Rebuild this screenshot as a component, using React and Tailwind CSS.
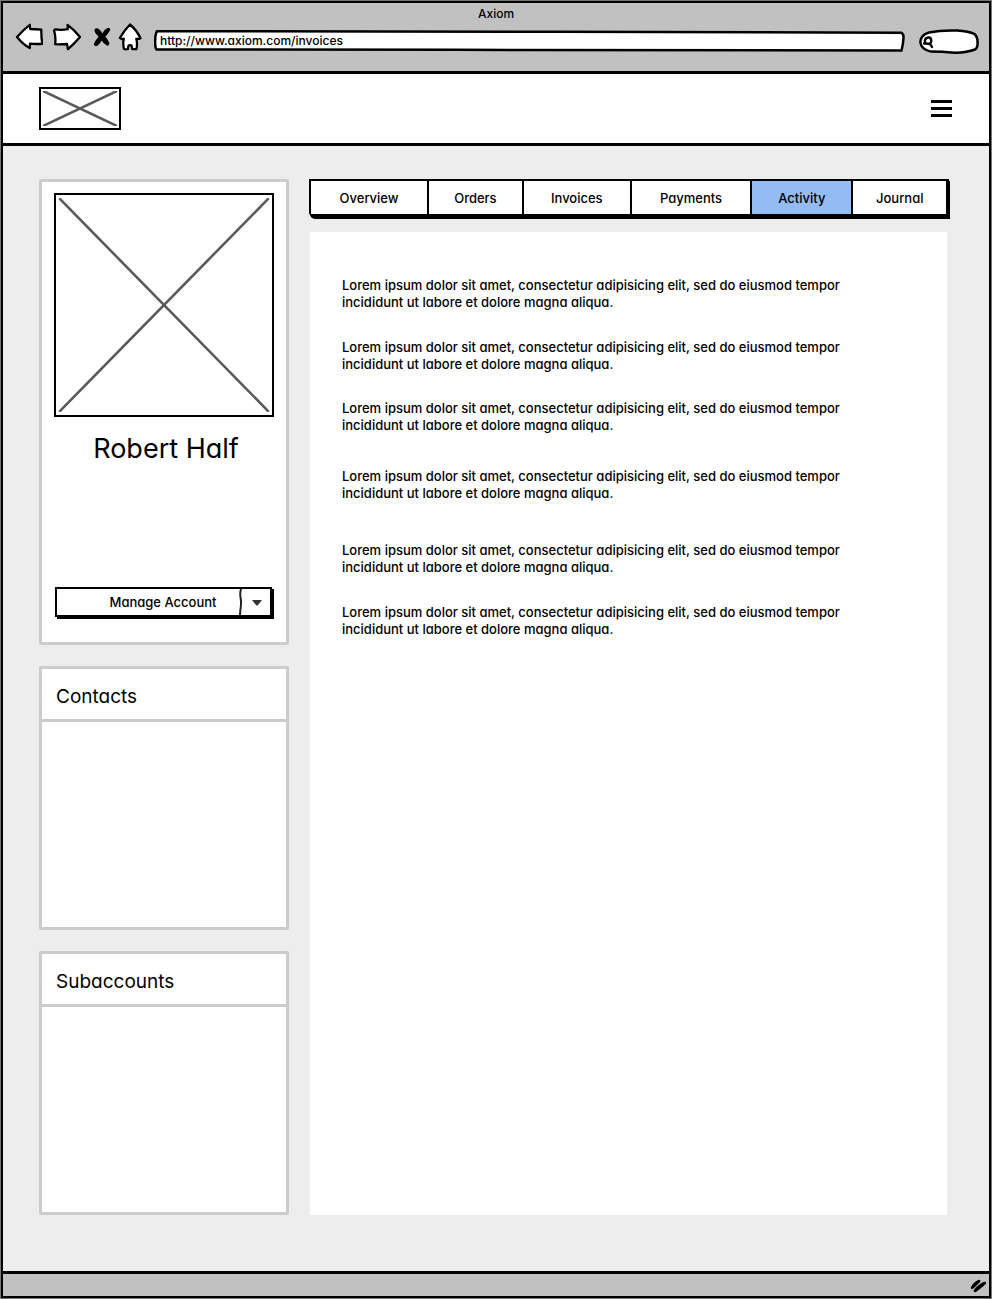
import React from "react";

const sketchFont =
  "font-['Inter','Liberation_Sans',sans-serif] font-medium [font-feature-settings:'cv11']";

const tabs = [
  { label: "Overview", size: "grow-[118]" },
  { label: "Orders", size: "grow-[94]" },
  { label: "Invoices", size: "grow-[108]" },
  { label: "Payments", size: "grow-[120]" },
  { label: "Activity", size: "grow-[101]", active: true },
  { label: "Journal", size: "grow-[94]" },
];

const lorem =
  "Lorem ipsum dolor sit amet, consectetur adipisicing elit, sed do eiusmod tempor incididunt ut labore et dolore magna aliqua.";

const activity = ["mb-7", "mb-[27px]", "mb-[34px]", "mb-10", "mb-7", "mb-0"];

function IconButton({ label, children }) {
  return (
    <button type="button" aria-label={label} className="shrink-0">
      {children}
    </button>
  );
}

const stroke = {
  stroke: "#000",
  strokeWidth: 2.3,
  strokeLinejoin: "round",
  strokeLinecap: "round",
};

function BackIcon() {
  return (
    <svg width="28" height="28" viewBox="0 0 28 28" fill="#fff" {...stroke}>
      <path d="M2 14 Q8.5 6.5 14.8 1.8 L15.2 6 Q20 6 26.3 6.7 Q26.2 14 27.3 20.8 Q21 21.3 15 20.6 L14.8 25 Q8 21.5 2 14 Z" />
    </svg>
  );
}

function ForwardIcon() {
  return (
    <svg width="28" height="28" viewBox="0 0 28 28" fill="#fff" {...stroke}>
      <path d="M1.2 8 Q1 6.6 2.6 6.4 Q9 7.300 14.8 6.2 L14.6 1.8 Q21.500 7 27 14 Q21.500 20.500 15 26.200 L14 21 Q8 21.500 2.2 21.200 Q3 14 1.200 8 Z" />
    </svg>
  );
}

function StopIcon() {
  return (
    <svg width="18" height="20" viewBox="0 0 18 20" fill="#000">
      <path d="M1.5 2.500 Q3 .2 5.500 1.800 Q8 3.500 9.300 6.500 Q11 2.500 14.500 1 Q18 .6 17 3.500 Q14.800 7 12.300 9.800 Q14.800 12 16.400 16 Q16.200 19 13.800 18.600 Q10.500 16.500 8.700 13.400 Q7 16.500 4.500 18.800 Q.6 19.700 .8 17 Q3 12.500 5.700 9.600 Q1.200 6 1.500 2.500 Z" />
    </svg>
  );
}

function HomeIcon() {
  return (
    <svg width="24" height="28" viewBox="0 0 24 28" fill="#fff" {...stroke}>
      <path d="M12 1.500 Q7 6.500 1.800 15 Q3.500 16.500 5.800 15.800 Q4.600 21 6 26 Q8 26.6 10 26 Q10 23.600 10.600 22.600 Q12.2 21.8 13.500 22.600 L14.2 26 Q16.4 26.400 18.500 26 Q19.600 21 18.300 15.800 Q21 16.200 22.500 15.200 Q18.500 7 12 1.500 Z" />
    </svg>
  );
}

function CrossBox({ className, label }) {
  return (
    <div
      role="img"
      aria-label={label}
      className={`border-2 border-black bg-white p-0.5 ${className}`}
    >
      <svg
        className="block h-full w-full"
        viewBox="0 0 100 100"
        preserveAspectRatio="none"
        stroke="#595959"
        strokeWidth="2.6"
        strokeLinecap="round"
      >
        <path d="M1 1 L99 99" vectorEffect="non-scaling-stroke" />
        <path d="M99 1 L1 99" vectorEffect="non-scaling-stroke" />
      </svg>
    </div>
  );
}

function SketchOutline({ viewBox, d }) {
  return (
    <svg
      aria-hidden="true"
      className="absolute inset-0 h-full w-full"
      viewBox={viewBox}
      preserveAspectRatio="none"
      fill="#fff"
      stroke="#000"
      strokeWidth="2.5"
      strokeLinejoin="round"
    >
      <path d={d} vectorEffect="non-scaling-stroke" />
    </svg>
  );
}

function BrowserBar() {
  return (
    <header className="flex h-[71px] flex-col border-b-3 border-black bg-[#c1c1c1]">
      <div className="h-5 pt-px text-center text-[12px] leading-5">Axiom</div>
      <div className="flex items-start pr-2.5 pl-3">
        <div className="flex items-center">
          <IconButton label="Back">
            <BackIcon />
          </IconButton>
          <div className="w-2.5" />
          <IconButton label="Forward">
            <ForwardIcon />
          </IconButton>
          <div className="w-3" />
          <IconButton label="Stop">
            <StopIcon />
          </IconButton>
          <div className="w-[7px]" />
          <IconButton label="Home">
            <HomeIcon />
          </IconButton>
        </div>
        <div className="relative mt-1.5 ml-3 h-[23px] min-w-0 flex-1">
          <SketchOutline
            viewBox="0 0 750 23"
            d="M3 2.200 Q300 1.800 400 2.700 T746 3.700 Q748.800 4.500 748.500 9 Q748.200 15 746.500 21.600 Q500 21.600 300 20.800 T2.500 20.500 Q.8 18 1.200 12 Q1.200 5 3 2.200 Z"
          />
          <input
            type="text"
            aria-label="Address"
            defaultValue="http://www.axiom.com/invoices"
            className="relative block h-[23px] w-full bg-transparent px-1.5 text-[12px] outline-none"
          />
        </div>
        <label className="relative mt-1.5 ml-3.5 flex h-[25px] w-[60px] items-center">
          <SketchOutline
            viewBox="0 0 60 25"
            d="M1.300 13 Q1.500 6 10 3.500 Q22 1 38 1.500 Q50 2.300 55.500 5 Q58.800 8 58.600 14 Q58.600 19 56 20.500 Q48 23.500 36 23.800 Q22 22.600 12 22.600 Q2 20.500 1.300 13 Z"
          />
          <svg
            width="13"
            height="14"
            viewBox="0 0 13 14"
            fill="none"
            className="relative ml-[3px] shrink-0"
            {...stroke}
          >
            <path d="M6.500 2.500 Q3 2.800 2.800 6 Q3 9 6.500 8.800 Q9.600 8.600 9.300 5.300 Q9 2.300 6.500 2.500 Z M2 8.500 L4 8.300 M7.500 9 Q9.300 10 10 12" />
          </svg>
          <input
            type="text"
            aria-label="Search"
            className="relative w-full min-w-0 bg-transparent pr-2 text-[12px] outline-none"
          />
        </label>
      </div>
    </header>
  );
}

function Panel({ title }) {
  return (
    <section className="flex h-[264px] flex-col rounded-[2px] border-3 border-[#ccc] bg-white">
      <h2 className="h-[53px] border-b-3 border-[#ccc] px-3.5 text-[19px] leading-[56px] font-normal">
        {title}
      </h2>
    </section>
  );
}

export default function App() {
  return (
    <div
      className={`flex min-h-screen flex-col bg-[#777] p-px text-black ${sketchFont}`}
    >
      <div className="flex grow flex-col border-2 border-black bg-[#ededed]">
        <BrowserBar />

        <div className="flex h-[72px] items-center justify-between border-b-3 border-black bg-white pr-[37px] pl-9">
          <CrossBox className="h-[43px] w-[82px]" label="Logo" />
          <button
            type="button"
            aria-label="Menu"
            className="flex w-[21px] flex-col gap-1"
          >
            <span className="h-[3px] w-full bg-black" />
            <span className="h-[3px] w-full bg-black" />
            <span className="h-[3px] w-full bg-black" />
          </button>
        </div>

        <main className="flex grow gap-[21px] pt-[33px] pr-[42px] pb-14 pl-9">
          <aside className="flex w-[250px] shrink-0 flex-col gap-[21px]">
            <section className="flex h-[466px] flex-col rounded-[2px] border-3 border-[#ccc] bg-white px-3 pt-[11px] pb-[25px]">
              <CrossBox className="h-[224px]" label="Profile picture" />
              <h1 className="mt-3.5 pl-1 text-center text-[27px] leading-9 font-normal">
                Robert Half
              </h1>
              <button
                type="button"
                className="mt-auto mr-0.5 ml-px flex h-[30px] items-stretch border-2 border-black bg-white text-[13px] shadow-[2px_2px_0_#000]"
              >
                <span className="flex grow items-center justify-center pt-px pl-[30px]">
                  Manage Account
                </span>
                <svg
                  className="h-full w-[3px] shrink-0"
                  viewBox="0 0 3 25"
                  preserveAspectRatio="none"
                  fill="none"
                  stroke="#222"
                  strokeWidth="2"
                >
                  <path d="M2 0 Q.8 4 1.500 8 Q2.400 12 1.800 17 Q1.200 21 1 25" />
                </svg>
                <span className="flex w-7 items-center justify-center pt-0.5 pl-0.5">
                  <svg width="10" height="6" viewBox="0 0 10 6" fill="#333">
                    <path d="M0 0 H10 L6 5 Q5 6 4 5 Z" />
                  </svg>
                </span>
              </button>
            </section>
            <Panel title="Contacts" />
            <Panel title="Subaccounts" />
          </aside>

          <div className="flex min-w-0 grow flex-col gap-[15px]">
            <nav className="-mr-0.5 -ml-px flex h-[38px] rounded-bl-[5px] border-2 border-r-3 border-b-3 border-black bg-white text-[13px] shadow-[1px_2px_0_#000]">
              {tabs.map((tab, i) => (
                <a
                  key={tab.label}
                  href="#"
                  aria-current={tab.active ? "page" : undefined}
                  className={`flex basis-0 items-center justify-center pt-[3px] ${tab.size} ${
                    i > 0 ? "border-l-2 border-black" : ""
                  } ${tab.active ? "bg-[#94bbf2]" : "bg-white"}`}
                >
                  {tab.label}
                </a>
              ))}
            </nav>
            <section className="grow bg-white px-8 pt-[45px]">
              {activity.map((gap, i) => (
                <p
                  key={i}
                  className={`max-w-[540px] text-[13px] leading-[17px] ${gap}`}
                >
                  {lorem}
                </p>
              ))}
            </section>
          </div>
        </main>

        <footer className="flex h-[25px] items-center justify-end border-t-3 border-black bg-[#c1c1c1] pt-0.5 pr-0.5">
          <svg width="17" height="14" viewBox="0 0 17 14" fill="#000">
            <path d="M.8 8.500 Q3 3.500 8.500 .8 Q11 .6 10.300 2.800 Q7.500 5.500 4 9 Q1 11.500 .8 8.500 Z" />
            <path d="M3.500 11.500 Q6.500 6.500 13.500 3 Q17 2.300 15.800 5 Q12 8.500 7 12.200 Q3.800 14.500 3.500 11.500 Z" />
          </svg>
        </footer>
      </div>
    </div>
  );
}
